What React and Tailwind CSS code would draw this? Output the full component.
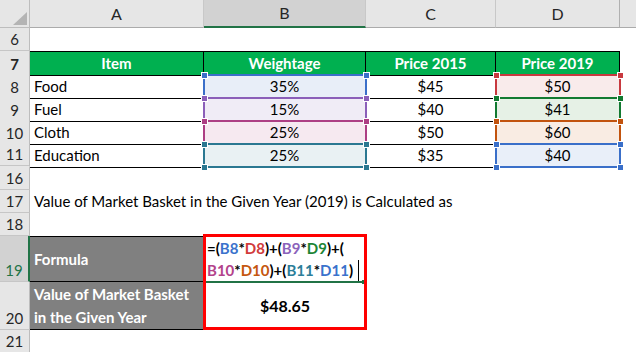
import React from 'react';

const cols = 'grid grid-cols-[30px_174px_162px_130px_124px_16px]';

// colour pairs for the reference highlights
const ranges = [
    { x: 203, r: 365, y: 74, b: 97, c: '#3b6fc9' },
    { x: 203, r: 365, y: 97, b: 120, c: '#8b5fb9' },
    { x: 203, r: 365, y: 120, b: 143, c: '#ad3f84' },
    { x: 203, r: 365, y: 143, b: 166, c: '#2b7891' },
    { x: 495, r: 619, y: 74, b: 97, c: '#c8393f' },
    { x: 495, r: 619, y: 97, b: 120, c: '#127a31' },
    { x: 495, r: 619, y: 120, b: 143, c: '#c2530e' },
    { x: 495, r: 619, y: 143, b: 166, c: '#3a6fc9' },
];

const data = [
    { n: 8, item: 'Food', w: '35%', p15: '$45', p19: '$50', bB: 'bg-[#e8eef8]', bD: 'bg-[#f9ebeb]' },
    { n: 9, item: 'Fuel', w: '15%', p15: '$40', p19: '$41', bB: 'bg-[#f0ecf6]', bD: 'bg-[#e6f1e6]' },
    { n: 10, item: 'Cloth', w: '25%', p15: '$50', p19: '$60', bB: 'bg-[#f6e9f0]', bD: 'bg-[#f9ece3]' },
    { n: 11, item: 'Education', w: '25%', p15: '$35', p19: '$40', bB: 'bg-[#e9f1f3]', bD: 'bg-[#e9eff9]' },
];

function RowHead({ n, sel, extra = 'border-b' }) {
    return (
        <div className={`flex items-end justify-center border-b-[#c6c6c6] text-[15px] leading-[21px] ${sel ? 'bg-[#d2d2d2] text-[#217346] border-r-2 border-r-[#217346]' : 'bg-[#e6e6e6] text-[#262626] border-r border-r-[#bdbdbd]'} ${extra}`}>
            {n}
        </div>
    );
}

function Ref({ c, children }) {
    return <span style={{ color: c }}>{children}</span>;
}

export default function App() {
    return (
        <div className="relative w-[636px] h-[352px] overflow-hidden bg-white font-['Lato',sans-serif] text-black">
            {/* column headers */}
            <div className={`${cols} h-[28px]`}>
                <div className="relative bg-[#e6e6e6] border-r border-b border-[#bdbdbd]">
                    <div className="absolute left-[13px] top-[12px] w-0 h-0 border-l-[14px] border-l-transparent border-b-[13px] border-b-[#b4b4b4]" />
                </div>
                <div className="flex items-center justify-center bg-[#e6e6e6] border-r border-b border-r-[#c8c8c8] border-b-[#ababab] text-[16px] text-[#262626]">A</div>
                <div className="flex items-center justify-center bg-[#d2d2d2] border-r border-r-[#c8c8c8] border-b-2 border-b-[#217346] text-[16px] text-[#262626]">B</div>
                <div className="flex items-center justify-center bg-[#e6e6e6] border-r border-b border-r-[#c8c8c8] border-b-[#ababab] text-[16px] text-[#262626]">C</div>
                <div className="flex items-center justify-center bg-[#e6e6e6] border-r border-b border-r-[#b0b0b0] border-b-[#ababab] text-[16px] text-[#262626]">D</div>
                <div className="bg-[#e6e6e6] border-b border-[#ababab]" />
            </div>

            {/* row 6 */}
            <div className={`${cols} h-[23px]`}>
                <RowHead n={6} />
            </div>

            {/* row 7 header of table */}
            <div className={`${cols} h-[24px] text-[15px] font-bold text-white`}>
                <RowHead n={7} />
                <div className="flex items-center justify-center bg-[#00b050] border-y border-r border-black">Item</div>
                <div className="flex items-center justify-center bg-[#00b050] border-y border-r border-black">Weightage</div>
                <div className="flex items-center justify-center bg-[#00b050] border-y border-r border-black">Price 2015</div>
                <div className="flex items-center justify-center bg-[#00b050] border-y border-r border-black">Price 2019</div>
            </div>

            {data.map((d) => (
                <div key={d.n} className={`${cols} h-[23px] text-[15px]`}>
                    <RowHead n={d.n} extra={d.n === 11 ? 'border-b-[3px] [border-bottom-style:double]' : 'border-b'} />
                    <div className="flex items-center pl-[4px] border-b border-r border-black">{d.item}</div>
                    <div className={`flex items-center justify-center border-b border-r border-black ${d.bB}`}>{d.w}</div>
                    <div className="flex items-center justify-center border-b border-r border-black">{d.p15}</div>
                    <div className={`flex items-center justify-center border-b border-r border-black ${d.bD}`}>{d.p19}</div>
                </div>
            ))}

            {/* rows 16-18 */}
            <div className={`${cols} h-[23px]`}>
                <RowHead n={16} />
            </div>
            <div className={`${cols} h-[23px] text-[15px]`}>
                <RowHead n={17} />
                <div className="flex items-center pl-[4px] whitespace-nowrap">
                    Value of Market Basket in the Given Year (2019) is Calculated as
                </div>
            </div>
            <div className={`${cols} h-[23px]`}>
                <RowHead n={18} />
            </div>

            {/* row 19 formula */}
            <div className={`${cols} h-[46px]`}>
                <RowHead n={19} sel />
                <div className="flex items-center pl-[4px] bg-[#808080] border-y border-black text-[15px] font-bold text-white">Formula</div>
                <div className="pl-[3px] pt-[1px] text-[15px] font-bold leading-[22px] whitespace-nowrap">
                    <div>=(<Ref c="#3a72cc">B8</Ref>*<Ref c="#d13b3b">D8</Ref>)+(<Ref c="#8b62bb">B9</Ref>*<Ref c="#1d8535">D9</Ref>)+(</div>
                    <div><Ref c="#b3438b">B10</Ref>*<Ref c="#c5570f">D10</Ref>)+(<Ref c="#2c7e99">B11</Ref>*<Ref c="#3a72cc">D11</Ref>)</div>
                </div>
            </div>

            {/* row 20 result */}
            <div className={`${cols} h-[48px]`}>
                <RowHead n={20} />
                <div className="flex flex-col justify-center pl-[4px] bg-[#808080] border-b border-black text-[15px] font-bold text-white leading-[23px]">
                    <span>Value of Market Basket</span>
                    <span>in the Given Year</span>
                </div>
                <div className="flex items-center justify-center text-[16px] font-bold">$48.65</div>
            </div>

            <div className={`${cols} h-[23px]`}>
                <RowHead n={21} />
            </div>

            {/* reference highlights drawn over the cells */}
            {ranges.map((g, i) => (
                <React.Fragment key={i}>
                    <div
                        className="absolute border-2 pointer-events-none"
                        style={{ left: g.x, top: g.y, width: g.r - g.x + 2, height: g.b - g.y + 2, borderColor: g.c }}
                    />
                    {[[g.x, g.y], [g.r, g.y], [g.x, g.b], [g.r, g.b]].map(([px, py], j) => (
                        <div
                            key={j}
                            className="absolute w-[7px] h-[7px] border border-white"
                            style={{ left: px - 2, top: py - 2, backgroundColor: g.c }}
                        />
                    ))}
                </React.Fragment>
            ))}

            {/* edit mode underline, cursor and red box */}
            <div className="absolute left-[205px] top-[281px] w-[157px] h-[2px] bg-[#217346]" />
            <div className="absolute left-[362px] top-[280px] w-[4px] h-[4px] bg-[#217346]" />
            <div className="absolute left-[358px] top-[260px] w-px h-[21px] bg-black" />
            <div className="absolute left-[203px] top-[234px] w-[164px] h-[96px] border-[3px] border-[#ff0000]" />
        </div>
    );
}
